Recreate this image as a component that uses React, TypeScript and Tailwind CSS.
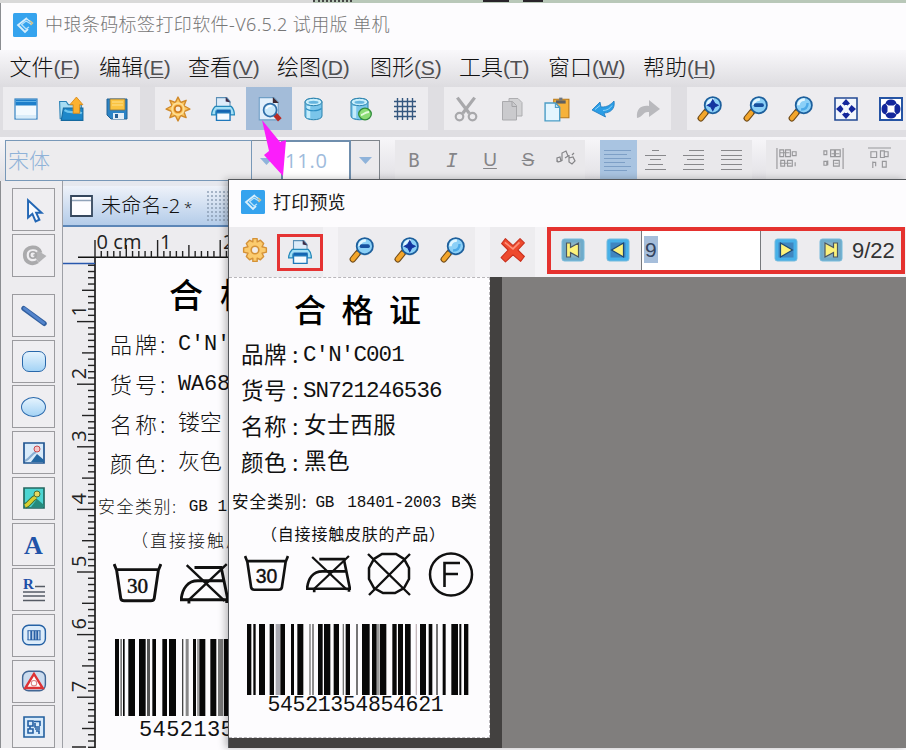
import type { ReactNode } from "react";
import clsx from "clsx";

const Svg = ({ size = 24, children }: { size?: number; children: ReactNode }) => (
  <svg width={size} height={size} viewBox="0 0 24 24" fill="none" className="block shrink-0">
    {children}
  </svg>
);

const Logo = ({ size = 24 }: { size?: number }) => (
  <Svg size={size}>
    <rect width="24" height="24" rx="1.5" fill="#35a3ee" />
    <path d="M14 5 5 12l7 7 3-3" stroke="#d8effc" strokeWidth="1.800" />
    <path d="m8 12 5-4 5 3M9 12l4 4 3-2" stroke="#b8e2fa" strokeWidth="1.300" />
    <path d="M13 5.500 18 9" stroke="#d8effc" strokeWidth="1.300" />
    <path d="m17 8 2.500 2-2 2" stroke="#d9c48a" strokeWidth="1.500" />
  </Svg>
);

const NewIcon = () => (
  <Svg>
    <rect x="1" y="2" width="22" height="20" fill="#f2f9fe" stroke="#3683c2" strokeWidth="1.200" />
    <path d="M1.500 2.500h21v6h-21z" fill="#1d7fcb" />
    <path d="M2 4.500h20" stroke="#5fb2e8" />
    <path d="M2 18h20v3.500H2z" fill="#d9ecf9" />
  </Svg>
);

const OpenIcon = () => (
  <Svg size={26}>
    <path d="M1.500 5h6l2 3h12v13H2z" fill="#a7dcf3" stroke="#2680b5" />
    <path d="M5 11h18v11.500H3z" fill="#1d87c9" stroke="#15699f" />
    <path d="M6 13c5 4 10 0 16 3" stroke="#6fc6ef" strokeWidth="2" />
    <path d="m17 1-6 7h3v8h6V8h3z" fill="#fbb130" stroke="#d98714" strokeWidth=".8" />
  </Svg>
);

const SaveIcon = () => (
  <Svg>
    <path d="M2 2h20v20H6l-4-4z" fill="#2b83c5" stroke="#236293" />
    <path d="M5 2h15v11H5z" fill="#fac340" stroke="#8a7444" strokeWidth=".8" />
    <path d="M7 5h11M7 8h11" stroke="#fde18e" />
    <path d="M8 16h11v6H8z" fill="#e2eef7" />
    <path d="M10 17h3v4h-3z" fill="#275f94" />
  </Svg>
);

const GearIcon = () => (
  <Svg size={26}>
    <path
      d="m12 1 2.500 5 5-2-2 5 5.500 3-5.500 2.500 2 5.500-5-2-2.500 5-2.500-5-5 2 2-5.500L1 12l5.500-3-2-5 5 2z"
      fill="#fcc45a"
      stroke="#d08a2c"
      strokeWidth="1.300"
      strokeLinejoin="round"
    />
    <circle cx="12" cy="12" r="5.500" stroke="#fddf98" strokeWidth="1.500" />
    <circle cx="12" cy="12" r="3" fill="#f7ecdc" stroke="#d07d1f" strokeWidth="1.500" />
  </Svg>
);

const CogIcon = () => (
  <Svg size={26}>
    <path
      d="M10 1.500h4v3l3-1.500 3 3-1.500 3 4 1v4l-4 1 1.500 3-3 3-3-1.500v3h-4v-3L7 21l-3-3 1.500-3-4-1v-4l4-1L4 6l3-3 3 1.500z"
      fill="#fbcb6e"
      stroke="#d59237"
      strokeWidth="1.300"
      strokeLinejoin="round"
    />
    <circle cx="12" cy="12" r="3.500" fill="#f1ece8" stroke="#d59237" strokeWidth="1.500" />
  </Svg>
);

const PrinterIcon = () => (
  <Svg size={26}>
    <path d="M6 11V1.500h9.500L18.500 5v6z" fill="#dcebf9" stroke="#5b8fb6" />
    <path d="m14.500 1 4.500 5-4.500-1z" fill="#3b2a45" />
    <path d="M5 9.500h14.500c2 2 3 5 3 8h-4V14h-13v3.500h-4c0-3 1.500-6 3.500-8z" fill="#a5dff5" stroke="#2589bb" strokeWidth="1.200" />
    <path d="M6 12.500h13v3H6z" fill="#1465b2" />
    <path d="M6 15.500h12.500v7H6z" fill="#f5fbff" stroke="#1f78bb" strokeWidth="1.300" />
  </Svg>
);

const PreviewIcon = () => (
  <Svg size={26}>
    <path d="M3 1.500h13.500l4 4V22H3z" fill="#e2effb" stroke="#6f9fc6" />
    <path d="M15.500 1v5.500H21z" fill="#3c2630" />
    <path d="m17.500 17 4.500 5" stroke="#b92b26" strokeWidth="4.500" />
    <circle cx="13" cy="13" r="6" fill="#c9e8fb" stroke="#2f6ea9" strokeWidth="1.600" />
    <path d="M9.500 12c1-3 3-3 5-3" stroke="#fff" strokeWidth="1.500" />
  </Svg>
);

const DatabaseIcon = ({ linked }: { linked?: boolean }) => (
  <Svg>
    <path d="M3 5c0-5 17-5 17 0v14c0 5-17 5-17 0z" fill="#7ac5ea" stroke="#2a82ae" />
    <path d="M6.500 9v12" stroke="#c4ecfb" strokeWidth="3.500" />
    <ellipse cx="11.500" cy="5" rx="8.500" ry="3.700" fill="#c8eefb" stroke="#2a82ae" />
    <ellipse cx="11.500" cy="5.300" rx="5" ry="1.500" fill="#64b4de" />
    {linked ? (
      <>
        <ellipse cx="17" cy="17" rx="6.300" ry="5.800" fill="#8bdc75" stroke="#2f8c3a" strokeWidth="1.300" />
        <path d="M13 18c3 0 3-3 8-3" stroke="#e2fadb" strokeWidth="1.800" />
      </>
    ) : (
      <path d="M4 11.500c3 3 12 3 15.500 0" stroke="#2e8fc4" strokeWidth="1.200" />
    )}
  </Svg>
);

const GridIcon = () => (
  <Svg>
    <path d="M4.500 1v22M9.500 1v22M14.500 1v22M19.500 1v22M1 4.500h22M1 9.500h22M1 14.500h22M1 19.500h22" stroke="#35577f" strokeWidth="1.400" />
  </Svg>
);

const CutIcon = () => (
  <Svg size={26}>
    <path d="M4 1.500 15 16M20 1.500 9 16" stroke="#a8a8ab" strokeWidth="3" />
    <circle cx="6" cy="19" r="3.500" stroke="#a8a8ab" strokeWidth="2" />
    <circle cx="18" cy="19" r="3.500" stroke="#a8a8ab" strokeWidth="2" />
  </Svg>
);

const CopyIcon = () => (
  <Svg>
    <path d="M9 1.500h9l4 4V19H9z" fill="#d2d2d4" stroke="#aeaeb1" />
    <path d="M2.500 4.500h10l4 4V23h-14z" fill="#cacacd" stroke="#aaaaad" />
    <path d="M12 4.500v5h5" stroke="#a3a3a6" />
  </Svg>
);

const PasteIcon = () => (
  <Svg size={26}>
    <path d="M9 3h14v17H9z" fill="#f6b23a" stroke="#b77717" />
    <path d="M11 4h9v3h-9z" fill="#5f6060" />
    <path d="M14 1.500h3V4h-3z" fill="#6e7780" />
    <path d="M1 6.500h9.500l4 4V23H1z" fill="#e3f5fe" stroke="#4c9dc6" strokeWidth="1.300" />
    <path d="M10.500 6.500v4h4" stroke="#4c9dc6" />
  </Svg>
);

const UndoIcon = () => (
  <Svg>
    <path d="M23 4c1.500 8-4 12-10 12l1.500 4L1 13l8-8 1 5c7 0 9-2 13-6z" fill="#2b9de5" stroke="#1d7ac0" strokeWidth=".8" />
    <path d="m4 12.500 5-4M12 13.500c4 0 7-2 9-5" stroke="#8fd4fa" />
  </Svg>
);

const RedoIcon = () => (
  <Svg>
    <path d="M1 21C0 11 6 8 13 9V3l11 9-11 8v-5c-6-1-6 5-12 6z" fill="#b9b9bd" />
  </Svg>
);

const ZoomIcon = ({ kind }: { kind?: "in" | "out" }) => (
  <Svg size={26}>
    <path d="m9 15-4.500 5.500" stroke="#6f4a18" strokeWidth="6" strokeLinecap="round" />
    <path d="m8.500 15.500-4 5" stroke="#f3a62b" strokeWidth="4" strokeLinecap="round" />
    <circle cx="15.500" cy="8.500" r="7.500" fill="#8bd0f7" stroke="#1d5f9c" strokeWidth="1.600" />
    <path d="M10.500 8.500a5 5 0 0 1 6-5" stroke="#e1f6ff" strokeWidth="2.500" />
    {kind === "in" && <path d="m15.500 3.500 1.700 3.300 3.300 1.700-3.300 1.700-1.700 3.300-1.700-3.300-3.300-1.700 3.300-1.700z" fill="#1436a0" stroke="#1436a0" />}
    {kind === "out" && <path d="M12.500 8.500h6" stroke="#17509f" strokeWidth="3.400" strokeLinecap="round" />}
    {!kind && <path d="M13 12.500c4 0 6-2 6-6" stroke="#4caae8" strokeWidth="2.200" />}
  </Svg>
);

const FitIcon = () => (
  <Svg>
    <path d="M1 1h22v22H1z" fill="#f2f6fc" stroke="#234a94" strokeWidth="1.600" />
    <path d="m12 2 4 4.500-4 3-4-3zM12 22l4-4.500-4-3-4 3zM2 12l4.500-4 3 4-3 4zM22 12l-4.500-4-3 4 3 4z" fill="#14279c" />
    <path d="M11 8h2v3h-2zM11 13h2v3h-2z" fill="#f2f6fc" />
  </Svg>
);

const FillIcon = () => (
  <Svg>
    <path d="M1 1h22v22H1z" fill="#fff" stroke="#2554a4" strokeWidth="2" />
    <path d="M12 2.500c3 0 5 1.500 5.500 4l-3 2h-5l-3-2C7 4 9 2.500 12 2.500zM12 21.500c-3 0-5-1.500-5.500-4l3-2h5l3 2c-.5 2.500-2.500 4-5.500 4zM2.500 12c0-3 1.500-5 4-5.500l2 3v5l-2 3c-2.500-.5-4-2.500-4-5.500zM21.500 12c0 3-1.500 5-4 5.500l-2-3v-5l2-3c2.500.5 4 2.500 4 5.500z" fill="#14279c" />
  </Svg>
);

const CursorIcon = () => (
  <Svg size={26}>
    <path d="M6.500 3v16l4-3.500 3 7 3.500-1.500-3-6.500H19z" fill="#f8fbff" stroke="#2367b5" strokeWidth="1.800" />
  </Svg>
);

const RotateIcon = () => (
  <Svg size={26}>
    <path d="M18 10c-1-7-14.500-7-14.500 2 0 7 7 9.500 12 6" stroke="#aaaaac" strokeWidth="3.500" />
    <path d="m11 12 5-4 7.500 5-7 6z" fill="#b2b2b4" />
    <circle cx="11" cy="12" r="3" stroke="#a6a6a8" strokeWidth="1.500" />
  </Svg>
);

const PictureIcon = ({ filled }: { filled?: boolean }) => (
  <Svg size={24}>
    <path
      d="M2 2h20v20H2z"
      fill={filled ? "#4cd5d2" : "#d9ebfa"}
      stroke={filled ? "#256861" : "#215591"}
      strokeWidth="1.700"
    />
    <path d="m9 21 6-8 7 6v2z" fill={filled ? "#258b7c" : "#2467a2"} />
    <path d="M3 20c5-2 6-7 11-9" stroke={filled ? "#3d6a33" : "#8aaed2"} strokeWidth={filled ? 5.500 : 2} />
    {filled && <path d="M3 20c5-2 6-7 11-9" stroke="#d7cf31" strokeWidth="3.500" />}
    <circle cx="15" cy="8" r="3" fill={filled ? "#e8d85e" : "#f5c6c8"} stroke={filled ? "#4d6d34" : "#c8494c"} />
  </Svg>
);

const RichTextIcon = () => (
  <Svg size={24}>
    <path d="M13 8.500h10M1 14h22M1 18h22M1 22.500h22" stroke="#565b65" strokeWidth="1.300" />
    <text x="1" y="11" fontSize="15" fontWeight="700" fill="#1f4fa8" fontFamily="Liberation Serif, serif">
      R
    </text>
  </Svg>
);

const BarcodeIcon = () => (
  <Svg size={26}>
    <rect x="1.500" y="3" width="21" height="18" rx="5.500" fill="#ddecfa" stroke="#2662a5" strokeWidth="1.300" />
    <path d="M6.500 8v8.500M17.500 8v8.500" stroke="#285fa5" />
    <path d="M9.500 8v8.500M12.500 8v8.500M15 8v8.500" stroke="#285fa5" strokeWidth="1.800" />
    <path d="M6 8h12M6 16.500h12" stroke="#285fa5" strokeWidth=".8" />
  </Svg>
);

const ShapeIcon = () => (
  <Svg size={26}>
    <rect x="1.500" y="3" width="21" height="18" rx="5.500" fill="#ccdcef" stroke="#426795" strokeWidth="1.300" />
    <path d="m12 5.500-8 13h16z" fill="#fff" stroke="#dd3235" strokeWidth="2.200" />
    <circle cx="12" cy="14" r="2.500" stroke="#dd8486" strokeWidth="1" />
  </Svg>
);

const QrIcon = () => (
  <Svg size={24}>
    <path d="M2 2h20v20H2z" fill="#d9ebfb" stroke="#23609f" strokeWidth="1.600" />
    <path d="M6 6h5v5H6zM12 6.500h6V11M13 8v4h5M6 14h5v4H6zM13 14h5M14 16h3v3M8 11v3" stroke="#235fa3" strokeWidth="1.600" />
  </Svg>
);

const NavIcon = ({ kind }: { kind: "first" | "prev" | "next" | "last" }) => {
  const dim = kind === "first" || kind === "last";
  return (
    <Svg size={24}>
      <rect x="1" y="1" width="22" height="22" rx="2.500" fill={dim ? "#70abc9" : "#47b0e8"} stroke="#77bbdc" />
      <path d="M4.500 4.500h15v15h-15z" fill={dim ? "#8ab3c6" : "#3f86c0"} />
      {kind === "first" && <path d="M5.500 5h4v4.500l8-4.500v14l-8-4.500V19h-4z" fill="#fdf27b" stroke="#4b5660" strokeWidth="1.200" />}
      {kind === "prev" && <path d="M17.500 5v14l-12-7z" fill="#fdf27b" stroke="#1d4873" strokeWidth="1.200" />}
      {kind === "next" && <path d="M6.500 5v14l12-7z" fill="#fdf27b" stroke="#1d4873" strokeWidth="1.200" />}
      {kind === "last" && <path d="M18.500 5h-4v4.500L6 5v14l8.500-4.500V19h4z" fill="#fdf27b" stroke="#4b5660" strokeWidth="1.200" />}
    </Svg>
  );
};

const DeleteIcon = () => (
  <Svg size={26}>
    <path d="m5 1.500 7 6.500 6.500-6.500 4 4-6 6.500 6 6-3.500 4.500-7-6-7 6.500-4-4L7.500 12l-6-6z" fill="#ee4a2e" stroke="#c9301e" strokeLinejoin="round" />
    <path d="m4.500 5 7.500 6 6-6" stroke="#ff917a" strokeWidth="1.500" />
  </Svg>
);

const AlignIcon = ({ kind }: { kind: "left" | "center" | "right" | "full" }) => {
  const paths = {
    left: "M-3 1.500h27M-3 5.500h23M-3 9.500h27M-3 13.500h21M-3 17.500h27M-3 21.500h23",
    center: "M8 1.500h7M1 6.500h21M6 10.500h11M4 15.500h15M1 20.500h21",
    right: "M7 1.500h15M1 6.500h21M5 10.500h17M2 15.500h20M1 20.500h21",
    full: "M1 1.500h21M1 6.500h21M1 10.500h21M1 15.500h21M1 20.500h21",
  };
  return (
    <svg width="24" height="23" viewBox="0 0 24 23" className="overflow-visible">
      <path d={paths[kind]} stroke={kind === "left" ? "#7d9fc6" : "#88888b"} strokeWidth="1.200" />
    </svg>
  );
};

const ArrangeIcon = ({ d }: { d: string }) => (
  <Svg size={23}>
    <path d={d} stroke="#98989b" strokeWidth="1.200" />
  </Svg>
);

const menus = [
  { label: "文件", key: "F", width: "w-[89.5px]" },
  { label: "编辑", key: "E", width: "w-[89px]" },
  { label: "查看", key: "V", width: "w-[89px]" },
  { label: "绘图", key: "D", width: "w-[93px]" },
  { label: "图形", key: "S", width: "w-[89px]" },
  { label: "工具", key: "T", width: "w-[89px]" },
  { label: "窗口", key: "W", width: "w-[95px]" },
  { label: "帮助", key: "H", width: "w-[89px]" },
];

const MenuBar = () => (
  <nav className="flex h-[37px] items-center bg-gradient-to-b from-[#f9f8fb] to-[#dddce0] pb-[3px] pl-[9.5px] text-[22px] font-light text-[#111]">
    {menus.map((menu) => (
      <span key={menu.key} className={clsx("shrink-0 whitespace-nowrap", menu.width)}>
        {menu.label}
        <span className="font-['Liberation_Sans',sans-serif] text-[21px] tracking-[-0.2px] text-[#505053]">
          (<span className="underline decoration-1 underline-offset-2">{menu.key}</span>)
        </span>
      </span>
    ))}
  </nav>
);

const ToolGroup = ({ children }: { children: ReactNode }) => (
  <div className="flex h-[43px] shrink-0 bg-[#edecef]">{children}</div>
);

const ToolButton = ({ active, children }: { active?: boolean; children: ReactNode }) => (
  <div className={clsx("flex w-[45.5px] items-center justify-center", active && "bg-[#a3bcd9]")}>{children}</div>
);

const ToolBar = () => (
  <div className="flex h-[50px] gap-[15.5px] overflow-hidden bg-[#dfdee2] pl-[3px]">
    <ToolGroup>
      <ToolButton><NewIcon /></ToolButton>
      <ToolButton><OpenIcon /></ToolButton>
      <ToolButton><SaveIcon /></ToolButton>
    </ToolGroup>
    <ToolGroup>
      <ToolButton><GearIcon /></ToolButton>
      <ToolButton><PrinterIcon /></ToolButton>
      <ToolButton active><PreviewIcon /></ToolButton>
      <ToolButton><DatabaseIcon /></ToolButton>
      <ToolButton><DatabaseIcon linked /></ToolButton>
      <ToolButton><GridIcon /></ToolButton>
    </ToolGroup>
    <ToolGroup>
      <ToolButton><CutIcon /></ToolButton>
      <ToolButton><CopyIcon /></ToolButton>
      <ToolButton><PasteIcon /></ToolButton>
      <ToolButton><UndoIcon /></ToolButton>
      <ToolButton><RedoIcon /></ToolButton>
    </ToolGroup>
    <ToolGroup>
      <ToolButton><ZoomIcon kind="in" /></ToolButton>
      <ToolButton><ZoomIcon kind="out" /></ToolButton>
      <ToolButton><ZoomIcon /></ToolButton>
      <ToolButton><FitIcon /></ToolButton>
      <ToolButton><FillIcon /></ToolButton>
    </ToolGroup>
  </div>
);

const Caret = () => (
  <svg width="13" height="7" viewBox="0 0 13 7">
    <path d="M0 0h13L6.500 7z" fill="#8fb3da" />
  </svg>
);

const FontBar = () => (
  <div className="flex h-11 shrink-0 overflow-hidden bg-gradient-to-b from-[#f7f6f9] to-[#e2e1e5] pt-[3px] pl-[5px]">
    <div className="flex h-[41px] w-[247px] shrink-0 items-center border-[1.5px] border-[#7898b8] bg-[#edecee] pl-[2px] text-[21px] font-light text-[#8fb2d8]">
      宋体
    </div>
    <div className="flex w-[29px] shrink-0 items-center justify-center border-t border-[#7f8c99] bg-[#ebeaed]">
      <Caret />
    </div>
    <div className="flex w-[70px] shrink-0 items-center border-2 border-[#6f8ead] bg-white pl-[2px] font-['Open_Sans',sans-serif] text-[20px] tracking-[0.8px] text-[#9ebbdc]">
      11.0
    </div>
    <div className="flex w-[29px] shrink-0 items-center justify-center border border-l-0 border-[#7f858c] bg-[#ebeaed]">
      <Caret />
    </div>
    <div className="ml-[15px] flex w-[190px] shrink-0 items-center bg-[#e9e8eb] font-['Liberation_Sans',sans-serif] text-[19px] text-[#858588]">
      <span className="w-[38px] text-center font-['DejaVu_Sans_Mono',monospace]">B</span>
      <span className="w-[38px] text-center font-['DejaVu_Sans_Mono',monospace] italic">I</span>
      <span className="w-[38px] text-center underline decoration-1 underline-offset-2">U</span>
      <span className="w-[38px] text-center line-through decoration-1">S</span>
      <span className="flex w-[38px] justify-center pb-1">
        <svg width="22" height="18" viewBox="0 0 22 18" fill="none">
          <path d="M2 12V8l3-1 1 4-3 1-1-2M7 11V3l4-2 2 5-3 2M14 5v7l3 2 3-3-2-4-4 1M17 5l2-2" stroke="#858588" strokeWidth="1.200" />
        </svg>
      </span>
    </div>
    <div className="ml-[15px] flex w-[152px] shrink-0 bg-[#e9e8eb]">
      <div className="flex w-[37px] items-center justify-center overflow-hidden bg-[#a9c4e1]"><AlignIcon kind="left" /></div>
      <div className="flex w-[38px] items-center justify-center"><AlignIcon kind="center" /></div>
      <div className="flex w-[38px] items-center justify-center"><AlignIcon kind="right" /></div>
      <div className="flex w-[38px] items-center justify-center"><AlignIcon kind="full" /></div>
    </div>
    <div className="ml-[14px] flex w-[150px] shrink-0 items-center gap-[23px] bg-[#e9e8eb] pb-1 pl-[10px]">
      <ArrangeIcon d="M1 1v22M4 3h4v7H4zM10 3h5v7h-5zM17 5h4v4h-4zM5 14h4v6H5zM12 14h5v6h-5zM4 6h10M4 17h12M20 16v4" />
      <ArrangeIcon d="M22 1v22M2 4h3v4H2zM9 3h4v7H9zM14 3h5v7h-5zM2 15h3v4H2zM6 14v5M12 14h6v6h-6zM10 7h8M13 17h4" />
      <ArrangeIcon d="M0 1h24M3 5h6v6H3zM13 4h4v7h-4zM17 5h4v5h-4zM5 15v7M5 16h3v4M15 15h4v6h-4z" />
    </div>
  </div>
);

const SideButton = ({ children }: { children: ReactNode }) => (
  <div className="flex h-[43px] w-[43px] shrink-0 items-center justify-center border border-[#9b9b9f] bg-[#efeef1]">{children}</div>
);

const SideBar = () => (
  <aside className="flex w-[63px] shrink-0 flex-col gap-[2.7px] border-r border-[#9ea0a6] bg-[#edecef] pt-[7px] pl-3">
    <SideButton><CursorIcon /></SideButton>
    <SideButton><RotateIcon /></SideButton>
    <div className="h-3 shrink-0" />
    <SideButton>
      <Svg size={26}>
        <path d="m2.500 5 19 14" stroke="#315f9f" strokeWidth="4.500" strokeLinecap="round" />
        <path d="m3 5 18 13.500" stroke="#5384cc" strokeWidth="2.500" strokeLinecap="round" />
      </Svg>
    </SideButton>
    <SideButton><div className="h-[21px] w-6 rounded-[7px] border-[1.5px] border-[#2968ab] bg-gradient-to-b from-[#e5f3fd] to-[#a4d3f5]" /></SideButton>
    <SideButton><div className="h-[20px] w-[25px] rounded-[50%] border-[1.5px] border-[#2968ab] bg-gradient-to-b from-[#e5f3fd] to-[#a4d3f5]" /></SideButton>
    <SideButton><PictureIcon /></SideButton>
    <SideButton><PictureIcon filled /></SideButton>
    <SideButton><span className="pt-1 font-['Liberation_Serif',serif] text-[26px] leading-none font-bold text-[#2153a8]">A</span></SideButton>
    <SideButton><RichTextIcon /></SideButton>
    <SideButton><BarcodeIcon /></SideButton>
    <SideButton><ShapeIcon /></SideButton>
    <SideButton><QrIcon /></SideButton>
  </aside>
);

const CM = 62.6;
const ticks = Array.from({ length: 79 }, (_, i) => i);
const tickLength = (i: number) => (i % 10 === 0 ? 18 : i % 5 === 0 ? 13 : 7);

const TopRuler = () => (
  <svg width="165" height="31" viewBox="0 0 165 31" className="block shrink-0 bg-[#edecef]">
    <path d="M15 30.200h150" stroke="#111" strokeWidth="1.600" />
    {ticks.slice(0, 22).map((i) => (
      <path key={i} d={`M${32 + (i * CM) / 10} 31v-${tickLength(i)}`} stroke="#222" strokeWidth="1.400" />
    ))}
    <g fontFamily="Open Sans, sans-serif" fontSize="20" fill="#222">
      <text x="33.500" y="22" textLength="45">0 cm</text>
      <text x="97" y="22">1</text>
      <text x="160" y="22">2</text>
    </g>
  </svg>
);

const SideRuler = () => (
  <svg width="33" height="491" viewBox="0 0 33 491" className="block shrink-0 bg-[#edecef]">
    <path d="M32 0v491" stroke="#111" strokeWidth="1.600" />
    <path d="M0 5.500h32" stroke="#2858ae" strokeWidth="1.500" />
    {ticks.slice(1).map((i) => (
      <path key={i} d={`M32 ${1 + (i * CM) / 10}h-${tickLength(i)}`} stroke="#222" strokeWidth="1.400" />
    ))}
    {[1, 2, 3, 4, 5, 6, 7].map((n) => (
      <text
        key={n}
        transform={`translate(23 ${n * CM - 4}) rotate(-90)`}
        fontFamily="Open Sans, sans-serif"
        fontSize="20"
        fill="#222"
      >
        {n}
      </text>
    ))}
    <path d="M9 489h14" stroke="#222" strokeWidth="1.500" />
  </svg>
);

const WashIcon = ({ size, serif }: { size: number; serif?: boolean }) => (
  <svg width={size} height={size * 0.84} viewBox="0 0 44 37" fill="none">
    <path d="m1 1 2 5h38l2-5M3 5l4 27q.5 2 3 2h24q2.500 0 3-2l4-27" stroke="#111" strokeWidth="2.600" />
    <text x="22" y="27" textAnchor="middle" fontSize="19" fill="#111" stroke="#111" strokeWidth=".4" fontFamily={serif ? "Liberation Serif, serif" : "Liberation Sans, sans-serif"}>
      30
    </text>
  </svg>
);

const NoIronIcon = ({ size }: { size: number }) => (
  <svg width={size} height={size * 0.84} viewBox="0 0 44 37" fill="none">
    <path d="M13 4h24l6 29H1c1-10 6-17 15-17h23M8 33v3.500M42 33v3" stroke="#111" strokeWidth="2.600" />
    <path d="m6 2 34 32M42 1 7 34" stroke="#111" strokeWidth="2.200" />
  </svg>
);

const NoDryIcon = () => (
  <svg width="44" height="44" viewBox="0 0 44 44" fill="none">
    <path d="M15 2h14l8 5 5 9v11l-5 9-9 5H16l-9-5-5-9V16l5-9z" stroke="#111" strokeWidth="2.500" />
    <path d="m1 2 42 41M43 2 2 43" stroke="#111" strokeWidth="2.400" />
  </svg>
);

const DryCleanIcon = () => (
  <svg width="46" height="45" viewBox="0 0 46 45" fill="none">
    <circle cx="23" cy="22.500" r="21" stroke="#111" strokeWidth="2.500" />
    <path d="M16.500 35V11H32M16.500 22H30" stroke="#111" strokeWidth="2.600" />
  </svg>
);

type Bar = [start: number, end: number, color?: string];

const draftBars: Bar[] = [
  [0, 12], [16, 21, "#777"], [24, 29], [40, 60], [72, 92], [96, 105, "#555"], [112, 123], [142, 156],
  [162, 183], [201, 205, "#444"], [212, 221, "#888"], [234, 243], [247, 251, "#777"], [253, 271],
  [286, 304], [309, 325, "#777"], [327, 342],
];

const previewBars: Bar[] = [
  [0, 13], [19, 26], [36, 54], [68, 81], [86, 99, "#a9a9b1"], [100, 114], [132, 141], [151, 169],
  [187, 191, "#777"], [196, 200, "#555"], [213, 227], [231, 250], [260, 276], [287, 291, "#777"],
  [296, 309], [328, 332, "#333"], [345, 368], [375, 389], [390, 398, "#999"], [399, 418], [436, 449],
  [453, 468], [474, 491], [506, 510, "#c5b8bc"], [519, 537], [545, 556], [568, 572, "#333"], [587, 596],
  [613, 633], [637, 643], [651, 664],
];

const Barcode = ({ bars, width, height }: { bars: Bar[]; width: number; height: number }) => (
  <svg width={width} height={height} viewBox={`0 0 ${width * 3} 10`} preserveAspectRatio="none" className="block">
    {bars.map(([start, end, color = "#080808"]) => (
      <rect key={start} x={start} width={end - start} height="10" fill={color} />
    ))}
  </svg>
);

const mono = "font-['Liberation_Mono','Noto_Sans_CJK_SC',monospace]";

const draftRows = [
  ["品牌:", "C'N'"],
  ["货号:", "WA68"],
  ["名称:", "镂空"],
  ["颜色:", "灰色"],
];

const DraftLabel = () => (
  <div className="flex w-[260px] shrink-0 flex-col bg-[#fdfcfe] whitespace-nowrap text-[#111]">
    <div className="h-[67px] pt-[12px] pl-[73px] text-[34px] leading-[50px] font-medium tracking-[17px] text-black">合格</div>
    {draftRows.map(([label, value]) => (
      <div key={label} className="flex h-[39.7px] items-center text-[22px] leading-[39px] font-light">
        <span className="w-[82px] pl-[14px] tracking-[3px]">{label}</span>
        <span className={clsx(mono, "tracking-[-0.2px]")}>{value}</span>
      </div>
    ))}
    <div className="flex h-[46px] items-center pl-[2px] text-[17px] font-light tracking-[1.5px]">
      安全类别:<span className={clsx(mono, "ml-[11px] text-[16px] font-normal tracking-[0px]")}>GB 1</span>
    </div>
    <div className="flex h-[22px] items-center pl-[35px] text-[17px] font-light tracking-[2px]">（直接接触皮肤</div>
    <div className="flex h-[87px] gap-[18px] pt-[11px] pl-[17px]">
      <WashIcon size={49} serif />
      <NoIronIcon size={49} />
    </div>
    <div className="pl-[19px]">
      <Barcode bars={draftBars} width={114} height={77} />
    </div>
    <div className={clsx(mono, "pt-[2px] pl-[43px] text-[22px] leading-[25px] tracking-[0.4px]")}>5452135</div>
  </div>
);

const EditorPane = () => (
  <main className="flex w-[165px] shrink-0 flex-col overflow-hidden pt-[5px]">
    <div className="flex h-[41px] shrink-0 items-center border-b-2 border-[#5c86b7] bg-gradient-to-b from-[#eef2f9] to-[#b4cce9] pl-[7px]">
      <svg width="23" height="22" viewBox="0 0 23 22" fill="none">
        <path d="M1 1h21v20H1z" fill="#fdfdff" stroke="#35475d" strokeWidth="1.800" />
        <path d="M2 5.500h19" stroke="#90a3b9" strokeWidth="1.500" />
      </svg>
      <span className="ml-[8px] text-[20px] font-light tracking-[0.3px] whitespace-nowrap text-[#111]">
        未命名-2 <span className="-ml-[2px] text-[15px]">*</span>
      </span>
      <div className="ml-auto h-8 w-[22px] bg-[radial-gradient(#8093aa_22%,transparent_30%)] bg-[size:4px_4px]" />
    </div>
    <TopRuler />
    <div className="flex min-h-0 flex-1">
      <SideRuler />
      <DraftLabel />
    </div>
  </main>
);

const previewRows = [
  ["品牌", "C'N'C001"],
  ["货号", "SN721246536"],
  ["名称", "女士西服"],
  ["颜色", "黑色"],
];

const PreviewLabel = () => (
  <div className="flex h-[461px] w-[261px] flex-col border-t border-r border-b border-dashed border-[#b9b7bb] bg-[#fdfcfe] whitespace-nowrap text-[#111]">
    <div className="h-[59px] pt-[9px] pl-[65px] text-[32px] leading-[46px] font-medium tracking-[15.5px] text-black">合格证</div>
    {previewRows.map(([label, value]) => (
      <div key={label} className="flex h-9 items-center text-[22.5px] leading-9">
        <span className="w-[74px] pl-[12px] tracking-[0.6px]">
          {label}
          <span className="pl-[5px]">:</span>
        </span>
        <span className={clsx(mono, label === "名称" || label === "颜色" ? "pl-px tracking-[0.6px]" : "tracking-[-0.9px]")}>{value}</span>
      </div>
    ))}
    <div className="flex h-[43px] items-center pl-[3px] text-[16.5px] tracking-[1px]">
      安全类别:
      <span className={clsx(mono, "ml-[8px] text-[16px] tracking-[-0.2px]")}>GB</span>
      <span className={clsx(mono, "ml-[13px] text-[16px] tracking-[-0.2px]")}>18401-2003</span>
      <span className={clsx(mono, "ml-[10px] text-[16px] tracking-[-0.2px]")}>B类</span>
    </div>
    <div className="flex h-5 items-center pl-[32px] text-[16px] tracking-[0.8px]">（自接接触皮肤的产品）</div>
    <div className="flex h-[80px] items-start pt-[8px] pl-[15px]">
      <div className="pt-[3px]"><WashIcon size={45} /></div>
      <div className="ml-[17px] pt-[3px]"><NoIronIcon size={45} /></div>
      <div className="ml-[16px]"><NoDryIcon /></div>
      <div className="ml-[17px]"><DryCleanIcon /></div>
    </div>
    <div className="pl-[18px]">
      <Barcode bars={previewBars} width={222} height={71} />
    </div>
    <div className={clsx(mono, "pt-px pl-[38.5px] text-[21.5px] leading-[19px] tracking-[-0.35px]")}>54521354854621</div>
  </div>
);

const PreviewWindow = () => (
  <section className="absolute top-[179px] left-[228px] flex h-[569px] w-[678px] flex-col border-t border-l border-[#55585c] bg-[#fdfcfe] shadow-[-3px_0_7px_rgba(0,0,0,0.25)]">
    <header className="flex h-[47px] shrink-0 items-center pb-[3px] pl-3">
      <Logo />
      <span className="ml-[8px] text-[18px] tracking-[0.2px] text-[#181818]">打印预览</span>
    </header>
    <div className="flex h-[50px] shrink-0 bg-[#f4f3f6]">
      <div className="flex w-[94px] items-center bg-[#edecef]">
        <div className="flex w-12 items-center justify-center pb-1 pl-1"><CogIcon /></div>
        <div className="flex h-[37px] w-[46px] items-center justify-center border-[3px] border-[#e53333]"><PrinterIcon /></div>
      </div>
      <div className="ml-[15px] flex w-[137px] items-center justify-around bg-[#edecef] pb-1">
        <ZoomIcon kind="out" />
        <ZoomIcon kind="in" />
        <ZoomIcon />
      </div>
      <div className="ml-[15px] flex w-[45px] items-center justify-center bg-[#edecef] pb-1"><DeleteIcon /></div>
      <div className="ml-[12px] flex h-[47px] w-[358px] items-center border-4 border-[#e5322f] bg-[#edecef]">
        <div className="ml-[10px] pb-[2px]"><NavIcon kind="first" /></div>
        <div className="ml-[21px] pb-[2px]"><NavIcon kind="prev" /></div>
        <div className="ml-[11px] flex h-full w-[120px] items-center border-x border-[#77797d] bg-white pb-[2px] pl-[2px]">
          <span className="bg-[#a6bedb] px-px font-['Liberation_Sans',sans-serif] text-[21px] leading-[27px] text-[#34445e]">9</span>
        </div>
        <div className="ml-[13px] pb-[2px]"><NavIcon kind="next" /></div>
        <div className="ml-[21px] pb-[2px]"><NavIcon kind="last" /></div>
        <span className="ml-[9px] font-['Liberation_Sans',sans-serif] text-[22px] text-[#333]">9/22</span>
      </div>
    </div>
    <div className="flex-1 bg-[#807e7d]">
      <div className="h-full w-[273px] bg-[#434140]">
        <PreviewLabel />
      </div>
    </div>
  </section>
);

export default function App() {
  return (
    <div className="relative flex h-[750px] w-[906px] flex-col overflow-hidden bg-[#fdfcfe] font-['Noto_Sans','Noto_Sans_CJK_SC',sans-serif]">
      <div className="flex h-[3px] shrink-0 bg-[#b9c8b9]">
        <div className="w-[313px] bg-[#d9d9d9]" />
        <div className="h-[2px] w-[39px] border-b-2 border-dotted border-[#444]" />
        <div className="ml-[131px] h-[2px] w-[26px] bg-[#29242a]" />
        <div className="ml-[14px] h-[2px] w-[20px] bg-[#29242a]" />
      </div>
      <div className="flex h-[745px] shrink-0 flex-col border-l border-[#8b8d91]">
        <header className="flex h-[47px] shrink-0 items-center pb-[4px] pl-3">
          <Logo />
          <span className="ml-[8px] text-[18px] font-light tracking-[0.4px] text-[#777]">
            中琅条码标签打印软件-V6.5.2 试用版 单机
          </span>
        </header>
        <div className="-ml-px flex min-h-0 flex-1 flex-col">
          <MenuBar />
          <ToolBar />
          <FontBar />
          <div className="flex min-h-0 flex-1 overflow-hidden border-l border-[#8b8d91] bg-[#e6e8ee]">
            <div className="-ml-px flex min-h-0 flex-1">
              <SideBar />
              <EditorPane />
            </div>
          </div>
        </div>
      </div>
      <PreviewWindow />
      <svg width="26" height="58" viewBox="0 0 26 58" className="absolute top-[119px] left-[261px]">
        <path d="m1 1 18 22 6-2-3 36L3 36l5-4z" fill="#fb1efb" />
      </svg>
    </div>
  );
}
